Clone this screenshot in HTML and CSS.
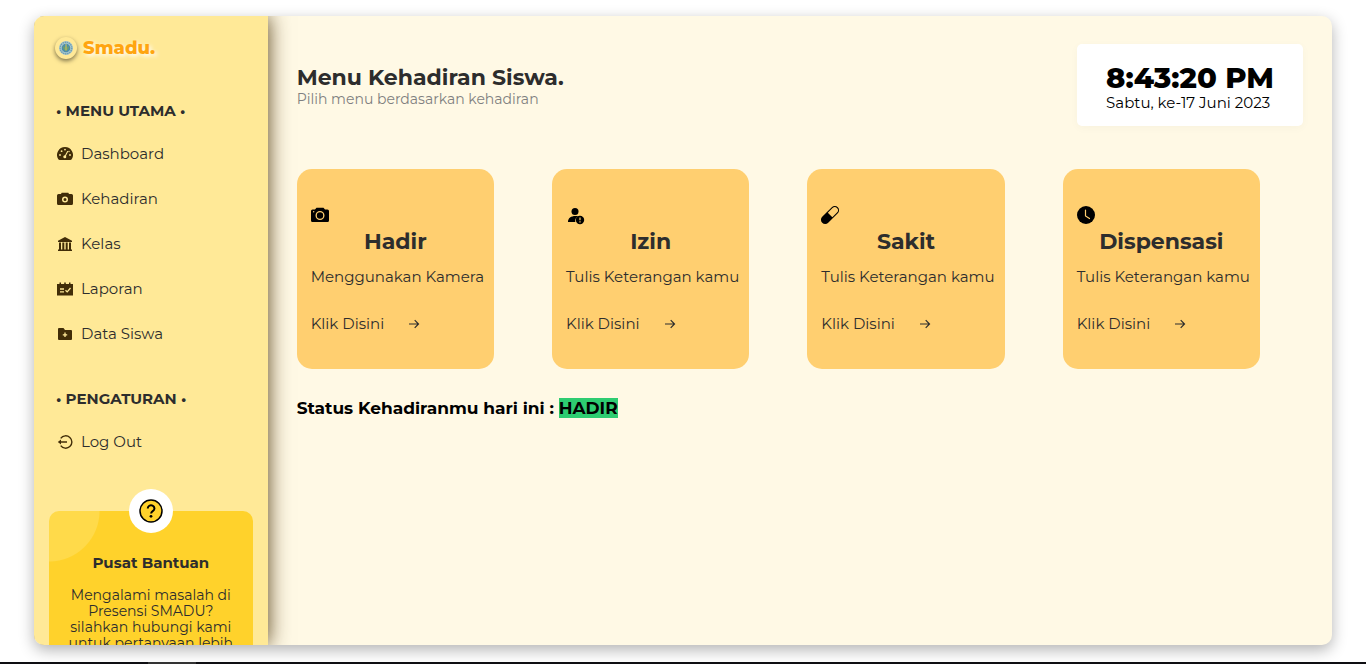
FILE: index.html
```html
<!DOCTYPE html>
<html lang="id">
<head>
<meta charset="utf-8">
<meta name="viewport" content="width=device-width, initial-scale=1">
<title>Smadu - Menu Kehadiran Siswa</title>
<link rel="stylesheet" href="styles.css">
</head>
<body>
<div class="app">
  <aside class="sidebar">
    <a class="brand" href="#">
      <svg class="brand-logo" viewBox="0 0 22 22" aria-hidden="true">
        <circle cx="11" cy="11" r="7" fill="#a9c9cf"/>
        <circle cx="11" cy="11" r="5.8" fill="none" stroke="#6f9db0" stroke-width="1.4" stroke-dasharray="1.4 .7"/>
        <circle cx="11" cy="11" r="4.3" fill="#4c8dab"/>
        <path d="M8 8.500q0 4.500 3 5.500q3-1 3-5.500l-1.500 2-1.500-3-1.500 3z" fill="#6fa06a"/>
        <path d="M11 7v6.500" stroke="#c9c06b" stroke-width="1"/>
      </svg>
      <span class="brand-name">Smadu.</span>
    </a>
    <nav class="menu">
      <h2 class="menu-title">• MENU UTAMA •</h2>
      <ul class="menu-list">
        <li><a class="menu-link" href="#"><svg class="menu-icon" viewBox="0 0 16 16" aria-hidden="true"><path fill="currentColor" d="M8 1a8 8 0 0 0-6.700 12.300c.4.500.9.700 1.500.7h10.400c.6 0 1.100-.2 1.500-.7A8 8 0 0 0 8 1z"/><g fill="#ffe997"><circle cx="8" cy="3.600" r=".9"/><circle cx="4.600" cy="5.200" r=".9"/><circle cx="3" cy="9" r=".9"/><circle cx="13" cy="9" r=".9"/><circle cx="12" cy="5.500" r=".7"/></g><path d="M8 10.500 10.600 5.500" stroke="#ffe997" stroke-width="1.100" stroke-linecap="round"/><circle cx="7.800" cy="10.800" r="1.500" fill="#ffe997"/></svg><span>Dashboard</span></a></li>
        <li><a class="menu-link" href="#"><svg class="menu-icon" viewBox="0 0 16 16" aria-hidden="true"><path fill="currentColor" fill-rule="evenodd" d="M1.500 3H4l.7-1.300h6.600L12 3h2.500A1.500 1.500 0 0 1 16 4.500v8a1.500 1.500 0 0 1-1.500 1.500h-13A1.500 1.500 0 0 1 0 12.500v-8A1.500 1.500 0 0 1 1.500 3zM8 5.600a3 3 0 1 0 0 6 3 3 0 0 0 0-6zm0 1.500a1.500 1.500 0 1 1 0 3 1.500 1.500 0 0 1 0-3z"/></svg><span>Kehadiran</span></a></li>
        <li><a class="menu-link" href="#"><svg class="menu-icon" viewBox="0 0 16 16" aria-hidden="true"><path fill="currentColor" d="M8 1l7 3.700V6H1V4.700zM2 6.500h2V14H2zM5.300 6.500h2V14h-2zM8.700 6.500h2V14h-2zM12 6.500h2V14h-2zM1 13.500h14V15H1z"/></svg><span>Kelas</span></a></li>
        <li><a class="menu-link" href="#"><svg class="menu-icon" viewBox="0 0 16 16" aria-hidden="true"><path fill="currentColor" d="M0 3h2.500V1.500H4V3h3.200V1.500h1.600V3H12V1.500h1.500V3H16v11.500H0z"/><path d="M3 8h4M3 10.800h4M8.500 9.200l1.700 1.700L13.500 7" fill="none" stroke="#ffe997" stroke-width="1.300"/></svg><span>Laporan</span></a></li>
        <li><a class="menu-link" href="#"><svg class="menu-icon" viewBox="0 0 16 16" aria-hidden="true"><path fill="currentColor" d="M2 2h4.500l1.500 2h6a1 1 0 0 1 1 1v8a1 1 0 0 1-1 1H2a1 1 0 0 1-1-1V3a1 1 0 0 1 1-1z"/><path d="M8 6.600v4.400M5.800 8.800h4.400" stroke="#ffe997" stroke-width="1.300"/></svg><span>Data Siswa</span></a></li>
      </ul>
      <h2 class="menu-title">• PENGATURAN •</h2>
      <ul class="menu-list">
        <li><a class="menu-link" href="#"><svg class="menu-icon" viewBox="0 0 16 16" aria-hidden="true"><path d="M3.700 4.300a6.200 6.200 0 1 1 0 7.400M2.500 8H10" fill="none" stroke="currentColor" stroke-width="1.400"/><path d="M.8 8 4 5.400v5.200z" fill="currentColor"/></svg><span>Log Out</span></a></li>
      </ul>
    </nav>
    <section class="help">
      <div class="help-badge">
        <svg class="help-icon" viewBox="0 0 24 24" aria-hidden="true"><circle cx="12" cy="12" r="11" fill="#ffd22b" stroke="#000" stroke-width="1.500"/><path d="M8.800 9.500a3.300 3.100 0 1 1 5.200 2.400c-1.300.9-1.900 1.300-1.900 2.700" fill="none" stroke="#000" stroke-width="2"/><circle cx="12" cy="17.300" r="1.400"/></svg>
      </div>
      <h2 class="help-title">Pusat Bantuan</h2>
      <p class="help-text">Mengalami masalah di Presensi SMADU? silahkan hubungi kami untuk pertanyaan lebih lanjut</p>
    </section>
  </aside>
  <main class="main">
    <header class="header">
      <div>
        <h1 class="title">Menu Kehadiran Siswa.</h1>
        <p class="subtitle">Pilih menu berdasarkan kehadiran</p>
      </div>
      <div class="clock">
        <time class="clock-time">8:43:20 PM</time>
        <p class="clock-date">Sabtu, ke-17 Juni 2023</p>
      </div>
    </header>
    <div class="cards">
      <article class="card">
        <svg class="card-icon" viewBox="0 0 20 20" aria-hidden="true"><path fill-rule="evenodd" d="M2.500 4.500H5l1.500-1.700h7L15 4.500h2.500A1.500 1.500 0 0 1 19 6v9.500a1.500 1.500 0 0 1-1.500 1.500h-15A1.500 1.500 0 0 1 1 15.500V6a1.500 1.500 0 0 1 1.500-1.500zM10 6a4.500 4.500 0 1 0 0 9 4.500 4.500 0 0 0 0-9zm0 1.300a3.200 3.200 0 1 1 0 6.400 3.200 3.200 0 0 1 0-6.400zM3.700 6a.7.7 0 1 0 0 1.400.7.7 0 0 0 0-1.400z"/></svg>
        <h2 class="card-title">Hadir</h2>
        <p class="card-text">Menggunakan Kamera</p>
        <a class="card-link" href="#">Klik Disini <svg class="arrow" viewBox="0 0 12 12" aria-hidden="true"><path d="M1 6h9M6.700 2.200 10.500 6 6.700 9.800"/></svg></a>
      </article>
      <article class="card">
        <svg class="card-icon" viewBox="0 0 20 20" aria-hidden="true"><circle cx="10" cy="6.500" r="3.500"/><path d="M3 17c0-4 3-6 7.500-6 1 0 2 .1 2.700.4A5 5 0 0 0 10.300 17z"/><circle cx="15" cy="15" r="4.200"/><path d="M15 12.500v2.800M15 16.200v1.200" stroke="#ffcf70" stroke-width="1.200"/></svg>
        <h2 class="card-title">Izin</h2>
        <p class="card-text">Tulis Keterangan kamu</p>
        <a class="card-link" href="#">Klik Disini <svg class="arrow" viewBox="0 0 12 12" aria-hidden="true"><path d="M1 6h9M6.700 2.200 10.500 6 6.700 9.800"/></svg></a>
      </article>
      <article class="card">
        <svg class="card-icon" viewBox="0 0 20 20" aria-hidden="true"><path d="M2.200 11.800 11.800 2.200a4 4 0 0 1 6 6L8.200 17.800a4 4 0 0 1-6-6z"/><path d="M7.800 7.700 12.500 3a3 3 0 0 1 4.500 4.500l-4.700 4.700z" fill="#ffcf70"/></svg>
        <h2 class="card-title">Sakit</h2>
        <p class="card-text">Tulis Keterangan kamu</p>
        <a class="card-link" href="#">Klik Disini <svg class="arrow" viewBox="0 0 12 12" aria-hidden="true"><path d="M1 6h9M6.700 2.200 10.500 6 6.700 9.800"/></svg></a>
      </article>
      <article class="card">
        <svg class="card-icon" viewBox="0 0 20 20" aria-hidden="true"><circle cx="10" cy="10" r="9"/><path d="M9.500 5v6l4 2.500" fill="none" stroke="#ffcf70" stroke-width="1.200" stroke-linecap="round"/></svg>
        <h2 class="card-title">Dispensasi</h2>
        <p class="card-text">Tulis Keterangan kamu</p>
        <a class="card-link" href="#">Klik Disini <svg class="arrow" viewBox="0 0 12 12" aria-hidden="true"><path d="M1 6h9M6.700 2.200 10.500 6 6.700 9.800"/></svg></a>
      </article>
    </div>
    <p class="status">Status Kehadiranmu hari ini : <span class="status-value">HADIR</span></p>
  </main>
</div>
<div class="strip"><div class="strip-thumb"></div></div>
</body>
</html>
```
FILE: styles.css
```css
* { box-sizing: border-box; margin: 0; padding: 0; }

body {
  display: flex;
  flex-direction: column;
  height: 100vh;
  overflow: hidden;
  background: #fff;
  color: #2d2d2d;
  font-family: Montserrat, Inter, "Open Sans", sans-serif;
  font-size: 15px;
  line-height: 18px;
}

a { color: inherit; text-decoration: none; }
ul { list-style: none; }
svg { flex: none; }

.app {
  display: flex;
  flex: 1;
  min-height: 0;
  margin: 16px 34px 17px;
  overflow: hidden;
  border-radius: 10px;
  background: #fff9e5;
  box-shadow: 0 5px 15px rgba(0, 0, 0, .3);
}

.sidebar {
  flex: 0 0 18%;
  padding: 0 15px;
  background: #ffe997;
  box-shadow: 0 0 20px rgba(70, 45, 0, .9);
}

.brand {
  display: flex;
  align-items: center;
  gap: 6px;
  padding: 21px 6px 0;
}
.brand-logo {
  width: 22px;
  height: 22px;
  border-radius: 50%;
  background: #ffe997;
  box-shadow: 0 2px 4px rgba(0, 0, 0, .5);
}
.brand-name {
  color: #ffa510;
  font-size: 18px;
  font-weight: 800;
  line-height: 22px;
  text-shadow: 2px 2px 4px #fff;
}

.menu { padding: 43px 7px 0; }
.menu-title {
  font-size: 15px;
  font-weight: 700;
  line-height: 18px;
}
.menu-list { padding: 11px 0 34px; }
.menu-link {
  display: flex;
  align-items: center;
  gap: 8px;
  height: 45px;
  padding-left: 1px;
}
.menu-icon { width: 16px; height: 16px; color: #412d08; }

.help {
  position: relative;
  margin-top: 13px;
  padding: 43px 16px 20px;
  border-radius: 10px;
  background: radial-gradient(circle at 0 0, #ffda4a 50px, #ffd22b 51px);
  text-align: center;
}
.help-badge {
  position: absolute;
  top: -22px;
  left: calc(50% - 22px);
  display: flex;
  align-items: center;
  justify-content: center;
  width: 44px;
  height: 44px;
  border-radius: 50%;
  background: #fff;
}
.help-icon { width: 24px; height: 24px; }
.help-title { font-size: 15px; font-weight: 700; line-height: 18px; }
.help-text { margin-top: 15px; font-size: 14px; line-height: 16px; }

.main { flex: 1; min-width: 0; padding: 28px 29px; }

.header { display: flex; align-items: center; justify-content: space-between; }
.title { font-size: 22px; font-weight: 700; line-height: 27px; }
.subtitle { color: #808080; font-size: 14px; line-height: 16px; }

.clock {
  padding: 17px 29px 14px;
  border-radius: 5px;
  background: #fff;
  color: #000;
  box-shadow: 0 2px 10px rgba(0, 0, 0, .03);
}
.clock-time { display: block; font-size: 29px; font-weight: 800; line-height: 33px; }
.clock-date { line-height: 18px; }

.cards {
  display: grid;
  grid-template-columns: repeat(4, minmax(0, 1fr));
  gap: 58px;
  margin: 43px 43px 0 0;
}
.card {
  display: flex;
  flex-direction: column;
  padding: 36px 14px;
  border-radius: 15px;
  background: #ffcf70;
  white-space: nowrap;
}
.card-icon { width: 20px; height: 20px; margin-left: -1px; fill: #000; }
.card-title {
  margin-top: 3px;
  font-size: 22px;
  font-weight: 700;
  line-height: 28px;
  text-align: center;
}
.card-text { margin-top: 12px; }
.card-link { display: flex; align-items: center; gap: 24px; margin-top: 29px; }
.arrow { width: 12px; height: 12px; fill: none; stroke: currentColor; stroke-width: 1.2; }

.status { margin-top: 29px; color: #000; font-size: 17px; font-weight: 700; line-height: 20px; }
.status-value { display: inline-block; background: #2ecc71; }

.strip { height: 2px; background: #0e0e12; }
.strip-thumb { width: 48px; height: 2px; margin-left: 148px; background: #333; }
```
